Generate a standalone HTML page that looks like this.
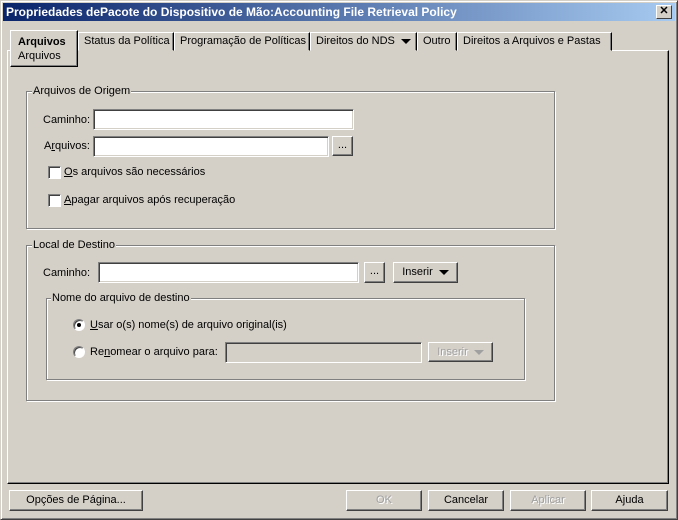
<!DOCTYPE html>
<html><head><meta charset="utf-8"><style>
*{box-sizing:border-box;margin:0;padding:0}
body{width:678px;height:520px;background:#d4d0c8;font-family:"Liberation Sans",sans-serif;font-size:11px;color:#000;position:relative;overflow:hidden}
.a{position:absolute}
.win{left:0;top:0;width:678px;height:520px;border:1px solid;border-color:#d4d0c8 #404040 #404040 #d4d0c8;box-shadow:inset 1px 1px #fff,inset -1px -1px #808080}
.title{left:3px;top:3px;width:672px;height:18px;background:linear-gradient(90deg,#0a246a,#a6caf0);color:#fff;font-weight:bold;font-size:12px;line-height:18px;padding-left:3px}
.close{left:656px;top:5px;width:16px;height:14px;background:#d4d0c8;border:1px solid;border-color:#fff #404040 #404040 #fff;font-size:11px;line-height:11px;text-align:center;font-weight:bold;color:#000}
.panel{left:7px;top:50px;width:662px;height:434px;border:1px solid;border-color:#fff #000 #000 #fff;box-shadow:inset -1px -1px #808080}
.tab{top:32px;height:19px;border:1px solid;border-color:#fff #000 transparent #fff;box-shadow:inset -1px 0 #808080;line-height:17px;padding-left:5px;background:#d4d0c8}
.grp{border:1px solid #808080;box-shadow:1px 1px #fff,inset 1px 1px #fff}
.leg{background:#d4d0c8;padding:0 1px;line-height:12px}
.in{background:#fff;border:1px solid;border-color:#808080 #fff #fff #808080;box-shadow:inset 1px 1px #404040,inset -1px -1px #d4d0c8}
.in.dis{background:#d4d0c8}
.btn{border:1px solid;border-color:#fff #404040 #404040 #fff;box-shadow:inset -1px -1px #808080;text-align:center;background:#d4d0c8}
.dis{color:#a0a0a0;text-shadow:1px 1px #fff}
.cb{width:13px;height:13px;background:#fff;border:1px solid;border-color:#808080 #fff #fff #808080;box-shadow:inset 1px 1px #404040}
.rd{width:12px;height:12px;border-radius:50%;background:#fff;border:1px solid;border-color:#808080 #fff #fff #808080;box-shadow:inset 1px 1px #404040}
u{text-decoration:underline}
.tri{display:inline-block;width:0;height:0;border-left:5px solid transparent;border-right:5px solid transparent;border-top:5px solid #000;vertical-align:middle;margin-left:6px}
</style></head><body>
<div class="a win"></div>
<div class="a title">Propriedades dePacote do Dispositivo de Mão:Accounting File Retrieval Policy</div>
<div class="a close">✕</div>

<div class="a panel"></div>
<div class="a tab" style="left:78px;width:96px">Status da Política</div>
<div class="a tab" style="left:174px;width:136px">Programação de Políticas</div>
<div class="a tab" style="left:310px;width:107px">Direitos do NDS<span class="tri"></span></div>
<div class="a tab" style="left:417px;width:40px">Outro</div>
<div class="a tab" style="left:457px;width:155px">Direitos a Arquivos e Pastas</div>
<div class="a" style="left:10px;top:30px;width:68px;height:37px;border:1px solid;border-color:#fff #000 #000 #fff;box-shadow:inset -1px -1px #808080;background:#d4d0c8;padding:4px 0 0 7px;line-height:14px"><b>Arquivos</b><br>Arquivos</div>

<div class="a grp" style="left:26px;top:91px;width:529px;height:138px"></div>
<div class="a leg" style="left:32px;top:85px">Arquivos de Origem</div>
<div class="a" style="left:43px;top:114px">Caminho:</div>
<div class="a in" style="left:93px;top:109px;width:261px;height:21px"></div>
<div class="a" style="left:44px;top:140px">A<u>r</u>quivos:</div>
<div class="a in" style="left:93px;top:136px;width:236px;height:21px"></div>
<div class="a btn" style="left:332px;top:136px;width:21px;height:20px;line-height:16px">...</div>
<div class="a cb" style="left:48px;top:166px"></div>
<div class="a" style="left:64px;top:166px"><u>O</u>s arquivos são necessários</div>
<div class="a cb" style="left:48px;top:194px"></div>
<div class="a" style="left:64px;top:194px"><u>A</u>pagar arquivos após recuperação</div>

<div class="a grp" style="left:26px;top:245px;width:529px;height:156px"></div>
<div class="a leg" style="left:32px;top:239px">Local de Destino</div>
<div class="a" style="left:43px;top:267px">Caminho:</div>
<div class="a in" style="left:98px;top:262px;width:261px;height:21px"></div>
<div class="a btn" style="left:364px;top:262px;width:21px;height:21px;line-height:17px">...</div>
<div class="a btn" style="left:393px;top:262px;width:65px;height:21px;line-height:19px">Inserir<span class="tri"></span></div>

<div class="a grp" style="left:46px;top:298px;width:479px;height:82px"></div>
<div class="a leg" style="left:51px;top:292px">Nome do arquivo de destino</div>
<div class="a rd" style="left:73px;top:319px"><div class="a" style="left:3px;top:3px;width:4px;height:4px;background:#000;border-radius:50%"></div></div>
<div class="a" style="left:90px;top:319px"><u>U</u>sar o(s) nome(s) de arquivo original(is)</div>
<div class="a rd" style="left:73px;top:346px"></div>
<div class="a" style="left:90px;top:346px">Re<u>n</u>omear o arquivo para:</div>
<div class="a in dis" style="left:225px;top:342px;width:197px;height:21px"></div>
<div class="a btn dis" style="left:428px;top:342px;width:65px;height:20px;line-height:18px">Inserir<span class="tri" style="border-top-color:#a0a0a0"></span></div>

<div class="a btn" style="left:9px;top:490px;width:134px;height:21px;line-height:19px">Opções de Pá<u>g</u>ina...</div>
<div class="a btn dis" style="left:346px;top:490px;width:76px;height:21px;line-height:19px">OK</div>
<div class="a btn" style="left:428px;top:490px;width:76px;height:21px;line-height:19px">Cancelar</div>
<div class="a btn dis" style="left:510px;top:490px;width:76px;height:21px;line-height:19px">Aplicar</div>
<div class="a btn" style="left:591px;top:490px;width:77px;height:21px;line-height:19px">Ajuda</div>
</body></html>
